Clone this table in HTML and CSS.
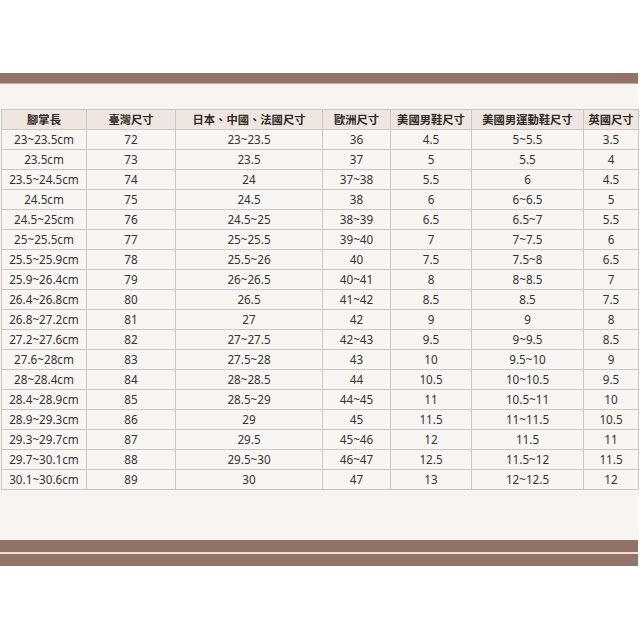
FILE: index.html
```html
<!DOCTYPE html>
<html lang="zh-Hant">
<head>
<meta charset="utf-8">
<link rel="stylesheet" href="styles.css">
</head>
<body>
<div class="page">
  <div class="bar top-bar"></div>
  <div class="panel">
    <table class="size-table">
      <colgroup>
        <col class="c1"><col class="c2"><col class="c3"><col class="c4"><col class="c5"><col class="c6"><col class="c7">
      </colgroup>
      <thead>
        <tr><th>腳掌長</th><th>臺灣尺寸</th><th>日本、中國、法國尺寸</th><th>歐洲尺寸</th><th>美國男鞋尺寸</th><th>美國男運動鞋尺寸</th><th>英國尺寸</th></tr>
      </thead>
      <tbody>
        <tr><td>23~23.5cm</td><td>72</td><td>23~23.5</td><td>36</td><td>4.5</td><td>5~5.5</td><td>3.5</td></tr>
        <tr><td>23.5cm</td><td>73</td><td>23.5</td><td>37</td><td>5</td><td>5.5</td><td>4</td></tr>
        <tr><td>23.5~24.5cm</td><td>74</td><td>24</td><td>37~38</td><td>5.5</td><td>6</td><td>4.5</td></tr>
        <tr><td>24.5cm</td><td>75</td><td>24.5</td><td>38</td><td>6</td><td>6~6.5</td><td>5</td></tr>
        <tr><td>24.5~25cm</td><td>76</td><td>24.5~25</td><td>38~39</td><td>6.5</td><td>6.5~7</td><td>5.5</td></tr>
        <tr><td>25~25.5cm</td><td>77</td><td>25~25.5</td><td>39~40</td><td>7</td><td>7~7.5</td><td>6</td></tr>
        <tr><td>25.5~25.9cm</td><td>78</td><td>25.5~26</td><td>40</td><td>7.5</td><td>7.5~8</td><td>6.5</td></tr>
        <tr><td>25.9~26.4cm</td><td>79</td><td>26~26.5</td><td>40~41</td><td>8</td><td>8~8.5</td><td>7</td></tr>
        <tr><td>26.4~26.8cm</td><td>80</td><td>26.5</td><td>41~42</td><td>8.5</td><td>8.5</td><td>7.5</td></tr>
        <tr><td>26.8~27.2cm</td><td>81</td><td>27</td><td>42</td><td>9</td><td>9</td><td>8</td></tr>
        <tr><td>27.2~27.6cm</td><td>82</td><td>27~27.5</td><td>42~43</td><td>9.5</td><td>9~9.5</td><td>8.5</td></tr>
        <tr><td>27.6~28cm</td><td>83</td><td>27.5~28</td><td>43</td><td>10</td><td>9.5~10</td><td>9</td></tr>
        <tr><td>28~28.4cm</td><td>84</td><td>28~28.5</td><td>44</td><td>10.5</td><td>10~10.5</td><td>9.5</td></tr>
        <tr><td>28.4~28.9cm</td><td>85</td><td>28.5~29</td><td>44~45</td><td>11</td><td>10.5~11</td><td>10</td></tr>
        <tr><td>28.9~29.3cm</td><td>86</td><td>29</td><td>45</td><td>11.5</td><td>11~11.5</td><td>10.5</td></tr>
        <tr><td>29.3~29.7cm</td><td>87</td><td>29.5</td><td>45~46</td><td>12</td><td>11.5</td><td>11</td></tr>
        <tr><td>29.7~30.1cm</td><td>88</td><td>29.5~30</td><td>46~47</td><td>12.5</td><td>11.5~12</td><td>11.5</td></tr>
        <tr><td>30.1~30.6cm</td><td>89</td><td>30</td><td>47</td><td>13</td><td>12~12.5</td><td>12</td></tr>
      </tbody>
    </table>
  </div>
  <div class="bar bottom-bar"></div>
  <div class="gap-line"></div>
  <div class="bar bottom-bar"></div>
</div>
</body>
</html>
```
FILE: styles.css
```css
html, body {
  margin: 0;
  padding: 0;
  background: #ffffff;
}
.page {
  width: 638px;
  padding-top: 73px;
  font-family: "Noto Sans", "Open Sans", "Noto Sans CJK TC", sans-serif;
  color: #333333;
}
.bar {
  background: #917369;
}
.top-bar {
  height: 10px;
  border-bottom: 1px solid #c9a9a0;
}
.panel {
  background: #f7f4f1;
  padding: 25px 0 50px 1px;
}
.size-table {
  border-collapse: collapse;
  table-layout: fixed;
  width: 637px;
  font-size: 11.7px;
}
.c1 { width: 85px; }
.c2 { width: 89px; }
.c3 { width: 147px; }
.c4 { width: 68px; }
.c5 { width: 81px; }
.c6 { width: 112px; }
.c7 { width: 55px; }
.size-table th,
.size-table td {
  border: 1px solid #ccc7c3;
  height: 19px;
  padding: 0;
  text-align: center;
  line-height: 19px;
  white-space: nowrap;
}
.size-table th {
  background: #efe6e1;
  font-weight: 700;
  font-size: 11.3px;
  color: #2e2a28;
}
.size-table td {
  background: #f8f5f2;
}
.bottom-bar {
  height: 12px;
}
.gap-line {
  height: 2px;
  background: #f3ddd3;
}
```
